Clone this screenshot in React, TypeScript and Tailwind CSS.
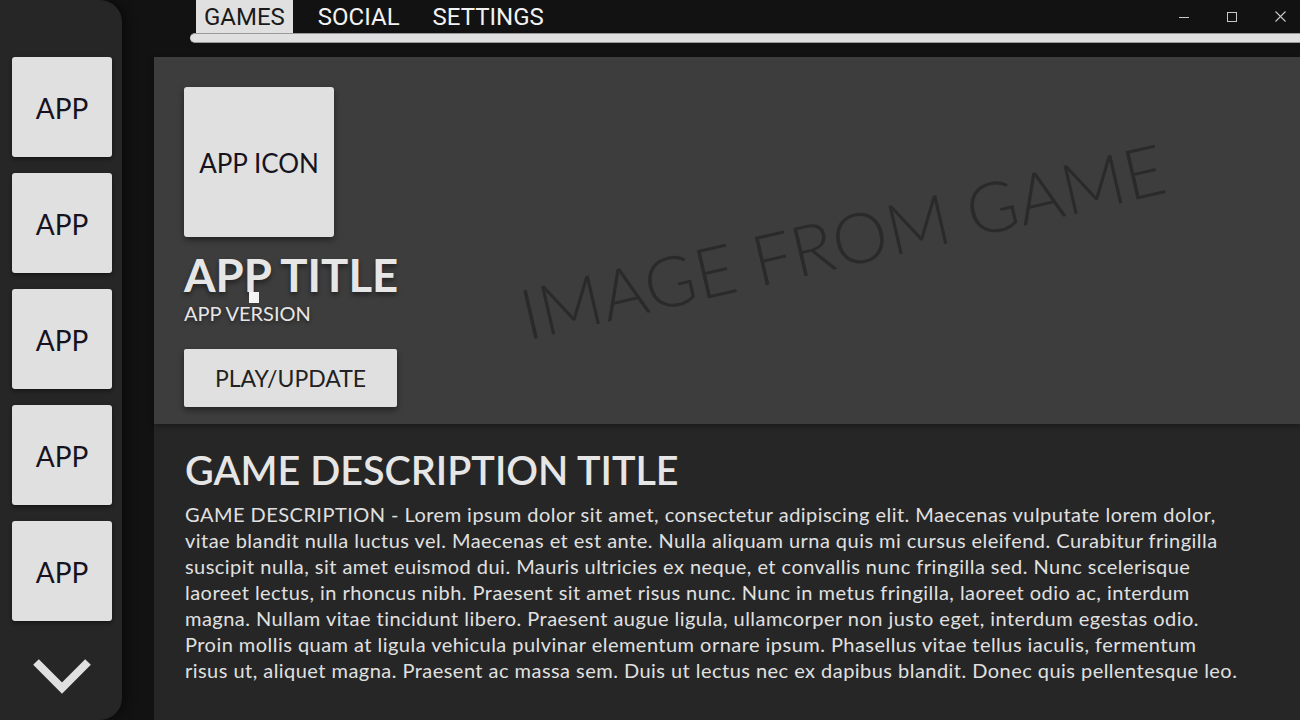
import React from 'react';

const apps = ['APP', 'APP', 'APP', 'APP', 'APP'];
const tabs = ['GAMES', 'SOCIAL', 'SETTINGS'];

// description is wrapped where the original window wraps it
const descLines = [
  'GAME DESCRIPTION - Lorem ipsum dolor sit amet, consectetur adipiscing elit. Maecenas vulputate lorem dolor,',
  'vitae blandit nulla luctus vel. Maecenas et est ante. Nulla aliquam urna quis mi cursus eleifend. Curabitur fringilla',
  'suscipit nulla, sit amet euismod dui. Mauris ultricies ex neque, et convallis nunc fringilla sed. Nunc scelerisque',
  'laoreet lectus, in rhoncus nibh. Praesent sit amet risus nunc. Nunc in metus fringilla, laoreet odio ac, interdum',
  'magna. Nullam vitae tincidunt libero. Praesent augue ligula, ullamcorper non justo eget, interdum egestas odio.',
  'Proin mollis quam at ligula vehicula pulvinar elementum ornare ipsum. Phasellus vitae tellus iaculis, fermentum',
  'risus ut, aliquet magna. Praesent ac massa sem. Duis ut lectus nec ex dapibus blandit. Donec quis pellentesque leo.',
];

const WindowControls = () => (
  <div className="ml-auto flex h-[33px] items-center gap-[8px]">
    <button className="flex h-[33px] w-[40px] items-center justify-center">
      <svg width="10" height="10" viewBox="0 0 10 10">
        <line x1="0" y1="5.5" x2="10" y2="5.5" stroke="#c8c8c8" strokeWidth="1" />
      </svg>
    </button>
    <button className="flex h-[33px] w-[40px] items-center justify-center">
      <svg width="10" height="10" viewBox="0 0 10 10">
        <rect x="0.5" y="0.5" width="9" height="9" fill="none" stroke="#c8c8c8" strokeWidth="1" />
      </svg>
    </button>
    <button className="flex h-[33px] w-[40px] items-center justify-center">
      <svg width="11" height="11" viewBox="0 0 11 11">
        <path d="M0.5 0.5 L10.5 10.5 M10.5 0.5 L0.5 10.5" stroke="#c8c8c8" strokeWidth="1.1" />
      </svg>
    </button>
  </div>
);

export default function App() {
  return (
    <div className="flex h-[720px] w-[1300px] overflow-hidden bg-[#121212] font-['Lato',sans-serif]">
      <aside className="z-10 flex w-[122px] shrink-0 flex-col items-start gap-4 rounded-r-[22px] bg-[#262626] pl-[12px] pt-[57px] shadow-[4px_0_12px_rgba(0,0,0,0.45)]">
        {apps.map((a, i) => (
          <div
            key={i}
            className="flex h-[100px] w-[100px] items-center justify-center rounded-[3px] bg-[#e0e0e0] pt-[2px] text-[28px] leading-none text-[#16131f] shadow-[0_2px_4px_rgba(0,0,0,0.45)]"
          >
            {a}
          </div>
        ))}
        <button className="ml-[18px] mt-[18px]">
          <svg width="64" height="42" viewBox="0 0 64 42">
            <polyline points="6,7 32,33 58,7" fill="none" stroke="#e0e0e0" strokeWidth="8" />
          </svg>
        </button>
      </aside>

      <main className="flex min-w-0 flex-1 flex-col">
        <header className="flex h-[57px] shrink-0 flex-col">
          <div className="flex h-[33px] items-stretch">
            <nav className="ml-[74px] flex gap-[17px] font-['Roboto',sans-serif]">
              {tabs.map((t, i) => (
                <button
                  key={t}
                  className={
                    i === 0
                      ? 'flex items-center bg-[#e0e0e0] px-[8px] text-[24px] leading-none text-[#1a1a1a]'
                      : 'flex items-center px-[8px] text-[24px] leading-none text-[#f2f2f2]'
                  }
                >
                  {t}
                </button>
              ))}
            </nav>
            <WindowControls />
          </div>
          <div className="ml-[68px] h-[10px] rounded-l-full border-y border-[#9a9a9a] bg-[#e0e0e0]" />
        </header>

        <section className="relative ml-[32px] h-[367px] shrink-0 overflow-hidden bg-[#3d3d3d] p-[30px] shadow-[0_2px_6px_rgba(0,0,0,0.35)]">
          <div className="pointer-events-none absolute left-[688px] top-[183px] -translate-x-1/2 -translate-y-1/2 -rotate-[13deg] whitespace-nowrap text-[70px] font-light leading-none text-[#2a2a2a]">
            IMAGE FROM GAME
          </div>
          <div className="relative flex flex-col items-start">
            <div className="flex h-[150px] w-[150px] items-center justify-center rounded-[3px] bg-[#e0e0e0] pt-[2px] text-[26px] leading-none text-[#16131f] shadow-[0_3px_6px_rgba(0,0,0,0.45)]">
              APP ICON
            </div>
            <h1 className="mt-[15px] text-[45.5px] font-bold leading-none text-[#e6e6e6] [text-shadow:0_3px_5px_rgba(0,0,0,0.45)]">
              APP TITLE
            </h1>
            <p className="mt-[5px] text-[20px] leading-none text-[#e6e6e6] [text-shadow:0_2px_4px_rgba(0,0,0,0.45)]">
              APP VERSION
            </p>
            <button className="mt-[26px] flex h-[58px] w-[213px] items-center justify-center rounded-[2px] bg-[#e0e0e0] pt-[2px] text-[23px] leading-none text-[#222222] shadow-[0_3px_6px_rgba(0,0,0,0.45)]">
              PLAY/UPDATE
            </button>
          </div>
          <div className="absolute left-[95px] top-[235px] h-[11px] w-[10px] bg-[#f4f4f4]" />
        </section>

        <section className="ml-[32px] flex-1 bg-[#262626] pl-[31px] pt-[26px]">
          <h2 className="text-[39.5px] font-semibold leading-none text-[#e6e6e6]">GAME DESCRIPTION TITLE</h2>
          <p className="mt-[11px] text-[20px] leading-[26px] tracking-[0.46px] text-[#e0e0e0]">
            {descLines.map((l, i) => (
              <span key={i} className="block whitespace-nowrap">
                {l}
              </span>
            ))}
          </p>
        </section>
      </main>
    </div>
  );
}
